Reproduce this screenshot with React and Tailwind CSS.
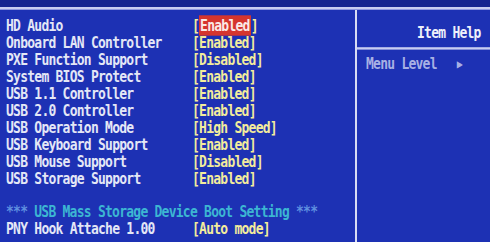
import React from 'react';

const rows = [
  ['HD Audio', 'Enabled', true],
  ['Onboard LAN Controller', 'Enabled'],
  ['PXE Function Support', 'Disabled'],
  ['System BIOS Protect', 'Enabled'],
  ['USB 1.1 Controller', 'Enabled'],
  ['USB 2.0 Controller', 'Enabled'],
  ['USB Operation Mode', 'High Speed'],
  ['USB Keyboard Support', 'Enabled'],
  ['USB Mouse Support', 'Disabled'],
  ['USB Storage Support', 'Enabled'],
];

function Row({ label, value, selected }) {
  return (
    <div className="flex h-[17px] items-center scale-y-[1.2]">
      <span className="w-[186px] text-[#e4e7f6]">{label}</span>
      <span className="text-[#f3ec9c]">
        [
        {selected ? (
          <span className="bg-[#d5352e] text-[#fbe9e6] px-[1px] py-[1px]">{value}</span>
        ) : (
          value
        )}
        ]
      </span>
    </div>
  );
}

export default function App() {
  return (
    <div
      className="w-[490px] h-[242px] overflow-hidden bg-[#1d31b4] flex flex-col font-bold text-[13px] tracking-[-0.75px] leading-none"
      style={{ fontFamily: '"DejaVu Sans Mono", "Liberation Mono", monospace' }}
    >
      {/* top strip with double rule */}
      <div className="h-[7px] bg-[#15248f] shrink-0" />
      <div className="h-[3px] bg-[#c9cdf0] border-b border-[#8f98e0] shrink-0" />

      <div className="flex flex-1">
        {/* settings column */}
        <div className="w-[357px] border-r-2 border-[#d8dcf4] pl-[6px] pt-[7px]">
          {rows.map(([l, v, s]) => (
            <Row key={l} label={l} value={v} selected={s} />
          ))}
          <div className="h-[16px]" />
          <div className="flex h-[17px] items-center text-[#3cb6d2] scale-y-[1.2]">
            <span className="text-[#5f8fe0]">***</span>
            <span className="ml-[7px]">USB Mass Storage Device Boot Setting</span>
            <span className="ml-[7px] text-[#5f8fe0]">***</span>
          </div>
          <Row label="PNY Hook Attache 1.00" value="Auto mode" />
        </div>

        {/* help column */}
        <div className="flex-1 flex flex-col">
          <div className="h-[36px] border-b-2 border-[#c8cdf2] flex items-center pl-[60px] pt-[9px] text-[#eef0fa] scale-y-[1.2]">
            Item Help
          </div>
          <div className="flex items-center pl-[9px] pt-[10px] text-[#a7b0e4] scale-y-[1.2]">
            <span>Menu Level</span>
            <span className="ml-[20px] text-[10px]">▶</span>
          </div>
        </div>
      </div>
    </div>
  );
}
